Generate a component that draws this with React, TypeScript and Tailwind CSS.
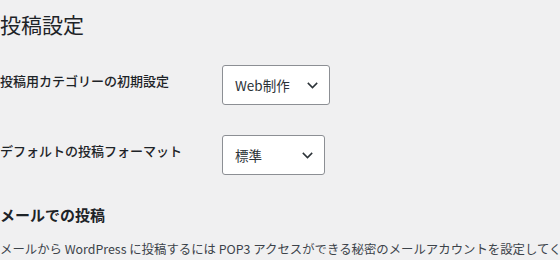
function Chevron() {
  return (
    <svg width="11" height="7" viewBox="0 0 11 7" fill="none" className="shrink-0">
      <path d="M0.8 0.9 L5.5 5.6 L10.2 0.9" stroke="#2c3338" strokeWidth="1.5" />
    </svg>
  );
}

function FakeSelect({ value, width }: { value: string; width: string }) {
  return (
    <div
      className={`${width} flex h-[40px] items-center justify-between rounded-[3px] border border-[#8c8f94] bg-white pl-[12px] pr-[11px] text-[13.5px] text-[#2c3338]`}
    >
      <span>{value}</span>
      <Chevron />
    </div>
  );
}

function SettingRow({ label, children }: { label: string; children: React.ReactNode }) {
  return (
    <div className="flex items-start">
      <div className="w-[222px] shrink-0 pt-[7px] text-[13px] leading-[17px] font-medium text-[#1d2327]">
        {label}
      </div>
      {children}
    </div>
  );
}

export default function App() {
  return (
    <div
      className="h-[260px] w-[560px] overflow-hidden bg-[#f0f0f1] text-[#1d2327]"
      style={{ fontFamily: '"Noto Sans CJK JP", "Noto Sans", sans-serif' }}
    >
      <h1 className="pt-[10px] text-[21px] leading-[28px] font-normal">投稿設定</h1>

      <div className="mt-[27px] flex flex-col gap-[30px]">
        <SettingRow label="投稿用カテゴリーの初期設定">
          <FakeSelect value="Web制作" width="w-[108px]" />
        </SettingRow>
        <SettingRow label="デフォルトの投稿フォーマット">
          <FakeSelect value="標準" width="w-[103px]" />
        </SettingRow>
      </div>

      <h2 className="mt-[30px] text-[15px] leading-[20px] font-semibold">メールでの投稿</h2>
      <p className="mt-[15px] whitespace-nowrap text-[12.4px] leading-[18px] text-[#3c434a]">
        メールから WordPress に投稿するには POP3 アクセスができる秘密のメールアカウントを設定してください。
      </p>
    </div>
  );
}
